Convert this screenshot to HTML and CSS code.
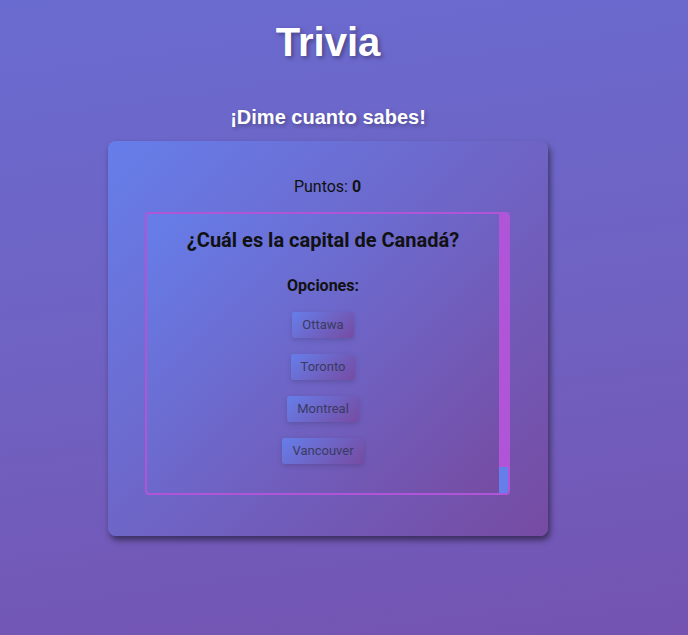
FILE: index.html
```html
<!DOCTYPE html>
<html lang="es">
<head>
<meta charset="utf-8">
<title>Trivia</title>
<link rel="stylesheet" href="styles.css">
</head>
<body>
  <main class="page">
    <h1 class="title">Trivia</h1>
    <h2 class="subtitle">¡Dime cuanto sabes!</h2>
    <div class="card">
      <p class="score">Puntos: <strong>0</strong></p>
      <div class="quiz">
        <div class="quiz-inner">
          <h3 class="question">¿Cuál es la capital de Canadá?</h3>
          <p class="options-label">Opciones:</p>
          <div class="options">
            <button class="option">Ottawa</button>
            <button class="option">Toronto</button>
            <button class="option">Montreal</button>
            <button class="option">Vancouver</button>
          </div>
        </div>
        <div class="scrollbar"><div class="thumb"></div></div>
      </div>
    </div>
  </main>
</body>
</html>
```
FILE: styles.css
```css
html, body {
  margin: 0;
  padding: 0;
}
body {
  height: 635px;
  overflow: hidden;
  background: linear-gradient(172deg, #6a6bd0 0%, #6f62c2 50%, #7453b1 100%);
  font-family: Roboto, "Liberation Sans", sans-serif;
}
.page {
  width: 656px;
  display: flex;
  flex-direction: column;
  align-items: center;
}
.title {
  margin: 20px 0 0;
  height: 44px;
  line-height: 44px;
  font-family: "Liberation Sans", Arial, sans-serif;
  font-size: 40px;
  font-weight: bold;
  color: #fff;
  text-shadow: 2px 2px 4px rgba(0, 0, 0, 0.35);
}
.subtitle {
  margin: 41px 0 0;
  height: 24px;
  line-height: 24px;
  font-family: "Liberation Sans", Arial, sans-serif;
  font-size: 20px;
  font-weight: bold;
  color: #fff;
  text-shadow: 2px 2px 4px rgba(0, 0, 0, 0.3);
}
.card {
  margin-top: 12px;
  width: 440px;
  height: 395px;
  box-sizing: border-box;
  border-radius: 8px;
  background: linear-gradient(135deg, #667eea 0%, #764ba2 100%);
  box-shadow: 2px 4px 6px rgba(0, 0, 0, 0.5);
  padding: 36px 38px 0 37px;
  display: flex;
  flex-direction: column;
  align-items: center;
}
.score {
  margin: 0;
  height: 20px;
  line-height: 20px;
  font-size: 16px;
  color: #111;
}
.score strong {
  font-weight: bold;
}
.quiz {
  margin-top: 15px;
  width: 365px;
  height: 283px;
  box-sizing: border-box;
  border: 2px solid #b055d8;
  border-radius: 4px;
  overflow: hidden;
  display: flex;
  background: linear-gradient(135deg, #667eea 0%, #764ba2 100%);
}
.quiz-inner {
  flex: 1;
  padding: 14px 0 0;
  display: flex;
  flex-direction: column;
  align-items: center;
}
.scrollbar {
  width: 9px;
  background: #667eea;
  display: flex;
  flex-direction: column;
}
.thumb {
  height: 253px;
  background: #b055d8;
}
.question {
  margin: 0;
  height: 24px;
  line-height: 24px;
  font-size: 20px;
  font-weight: bold;
  color: #111;
}
.options-label {
  margin: 24px 0 0;
  height: 20px;
  line-height: 20px;
  font-size: 16px;
  font-weight: bold;
  color: #111;
}
.options {
  margin-top: 16px;
  display: flex;
  flex-direction: column;
  align-items: center;
  gap: 16px;
}
.option {
  border: none;
  border-radius: 3px;
  padding: 5px 10px;
  height: 26px;
  line-height: 16px;
  font-family: Roboto, "Liberation Sans", sans-serif;
  font-size: 13px;
  color: #3a3a62;
  background: linear-gradient(135deg, #667eea 0%, #764ba2 100%);
  box-shadow: 0 2px 5px rgba(0, 0, 0, 0.15);
  cursor: pointer;
}
```
